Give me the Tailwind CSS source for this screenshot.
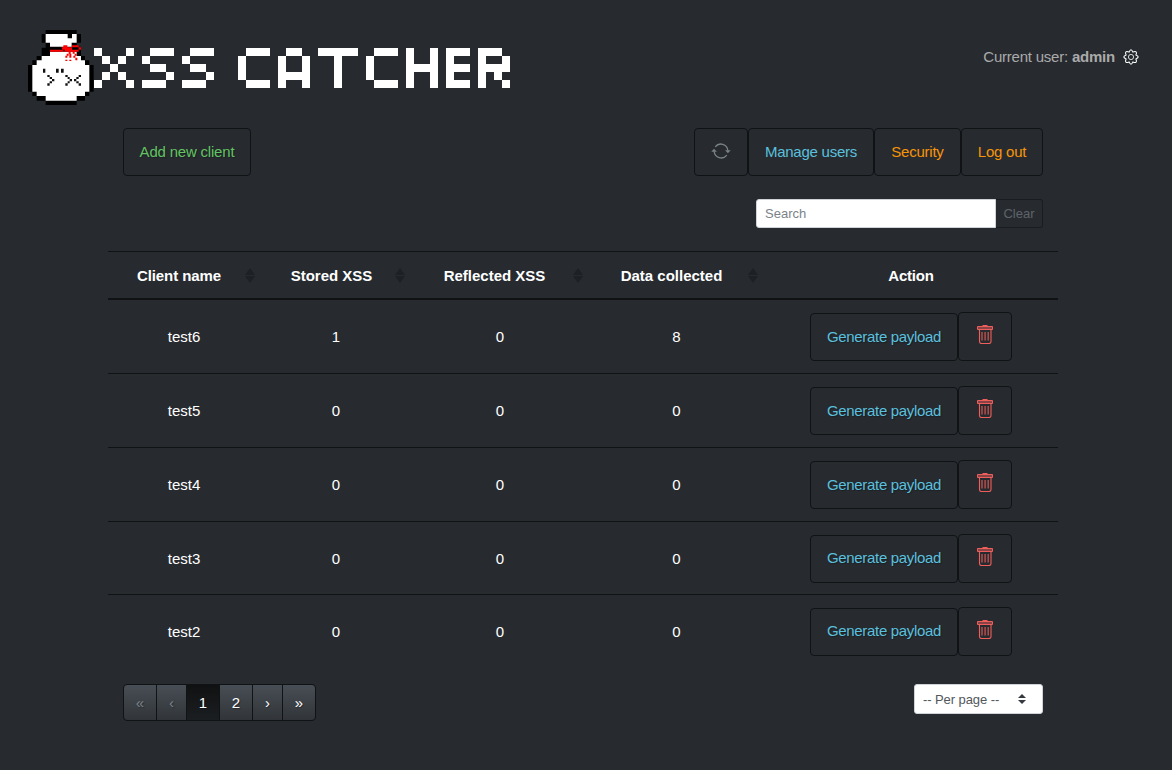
<!DOCTYPE html>
<html lang="en">
<head>
<meta charset="utf-8">
<title>XSS Catcher</title>
<script src="https://cdn.jsdelivr.net/npm/@tailwindcss/browser@4"></script>
</head>
<body class="h-[770px] overflow-hidden bg-[#272b30] font-['Liberation_Sans',Arial,sans-serif] text-[15px] leading-[22.5px] text-[#aaa]">
<svg class="hidden">
  <symbol id="trash" viewBox="0 0 16 20"><g fill="none" stroke="#ee5f5b"><path fill="#8a4244" d="M.5 2.500h15v3H.5z"/><path stroke-width="1.1" d="M2.500 5.500v12q0 2 2 2h7.500q2 0 2-2v-12"/><path stroke-width="1.3" stroke="#c9534f" d="M5 8v8.500M8.100 8v8.500M11.200 8v8.500"/><path stroke-width="1.2" d="M5.500 1.600h5"/></g></symbol>
  <symbol id="sort" viewBox="0 0 10 15"><path fill="#1d2024" d="M5 0l5 7H0zM5 15l5-7H0z"/></symbol>
</svg>
<header class="flex h-[128px] items-start justify-between pr-[33px] pl-5">
  <svg class="mt-5 h-[95px] w-[500px]" viewBox="0 0 500 95">
    <g transform="scale(.33333)">
      <path fill="#000" d="M77 30h93v12h13v26h-13v12h13v28h12v13h13v14h13v80h-13v13h-13v14h-25v13H77v-13H50v-14H37v-13H24v-80h13v-14h13v-13h15V83h12V68H65V42h12z"/>
      <path fill="#fff" d="M77 42h66v13h13V42h14v26h-15v12H90V68H77z"/>
      <path fill="#fff" d="M90 95h80v13h13v13h12v14h13v80h-13v13h-25v14H77v-14H50v-13H37v-80h13v-14h15v-13h25z"/>
      <path fill="#272b30" d="M183 80h15v28h-15z"/>
      <path fill="#f00" d="M90 89h40v6H90zM124 82h6v-6h12v6h14v-6h6v6h-6v7h20v-7h7v7h-7v6h-12v6h6v6h-6v-6h-6v-6h-6v6h-6v6h-6v-6h6v-6h-12v-6h-6zM162 76h14v6h-14zM136 107h6v6h-6zM148 101h6v12h-6zM160 107h6v6h-6zM136 119h6v4h-6zM148 119h6v4h-6zM166 113h6v8h-6z"/>
      <path fill="#111" d="M69 146h7v12h-7zM108 146h8v12h-8zM123 146h8v12h-8zM82 165h7v6h-7zM89 171h7v6h-7zM96 177h7v7h-7zM89 184h7v6h-7zM82 190h7v7h-7zM136 165h7v6h-7zM143 171h6v6h-6zM149 177h7v7h-7zM143 184h6v6h-6zM136 190h7v7h-7zM176 165h7v6h-7zM169 171h7v6h-7zM162 177h7v7h-7zM169 184h7v6h-7zM176 190h7v7h-7z"/>
    </g>
    <g fill="#fff" shape-rendering="crispEdges">
      <path d="M74 28h8v8h-8zM106 28h8v8h-8zM82 36h8v8h-8zM98 36h8v8h-8zM90 44h8v8h-8zM82 52h8v8h-8zM98 52h8v8h-8zM74 60h8v8h-8zM106 60h8v8h-8z"/>
      <path d="M130 28h24v8h-24zM122 36h8v8h-8zM130 44h16v8h-16zM146 52h8v8h-8zM122 60h24v8h-24z"/>
      <path d="M170 28h24v8h-24zM162 36h8v8h-8zM170 44h16v8h-16zM186 52h8v8h-8zM162 60h24v8h-24z"/>
      <path d="M226 28h24v8h-24zM218 36h8v24h-8zM226 60h24v8h-24z"/>
      <path d="M266 28h16v8h-16zM258 36h8v32h-8zM282 36h8v32h-8zM266 52h16v8h-16zM258 36h8v8h-8z"/>
      <path d="M298 28h40v8h-16v32h-8V36h-16z"/>
      <path d="M354 28h24v8h-24zM346 36h8v24h-8zM354 60h24v8h-24z"/>
      <path d="M386 28h8v16h16V28h8v40h-8V52h-16v16h-8z"/>
      <path d="M426 28h24v8h-16v8h16v8h-16v8h16v8h-24z"/>
      <path d="M458 28h24v8h-16v8h16v-8h8v16h-8v8h-8v-8h-8v16h-8zM482 60h8v8h-8z"/>
    </g>
  </svg>
  <div class="mt-[46px] flex items-center">
    <span class="tracking-[-0.22px]">Current user: <b>admin</b></span>
    <svg class="ml-2 size-4" viewBox="0 0 16 16" fill="none" stroke="#fff"><circle cx="8" cy="8" r="2.6" opacity=".8"/><path stroke-width="1.1" stroke-linejoin="round" d="M8 .8Q8.900 .8 9.900 3.100Q12.300 2 13.100 2.900Q14 3.700 12.900 6.100Q15.200 7.100 15.200 8Q15.200 8.900 12.900 9.900Q14 12.300 13.100 13.100Q12.300 14 9.900 12.900Q8.900 15.200 8 15.200Q7.100 15.200 6.100 12.900Q3.700 14 2.900 13.100Q2 12.300 3.100 9.900Q.8 8.900 .8 8Q.8 7.100 3.100 6.100Q2 3.700 2.900 2.900Q3.700 2 6.100 3.100Q7.100 .8 8 .8Z"/></svg>
  </div>
</header>
<main class="mx-auto w-[950px] -translate-x-[3px]">
  <div class="flex h-12 justify-between px-[15px] [&>*]:[text-shadow:1px_1px_1px_rgba(0,0,0,.3)]">
    <button class="h-12 w-32 rounded border border-[#101214] tracking-[-0.2px] text-[#62c462]">Add new client</button>
    <div class="flex tracking-[-0.24px]">
      <button class="flex h-12 w-[54px] items-center justify-center rounded border border-[#101214]"><svg class="-mt-0.5 h-5 w-5" viewBox="0 0 20 20" fill="none" stroke="#7a8288" stroke-width="1.3"><path d="M3.200 10.500a7 7 0 0 0 12.600 3.600M16.800 9.500A7 7 0 0 0 4.200 5.900"/><path fill="#7a8288" stroke="none" d="M.3 10.700 3 7.800l2.900 2.900zM14.100 9.300h5.600L16.900 12.200z"/></svg></button>
      <button class="h-12 w-[126px] rounded border border-[#101214] text-[#5bc0de]">Manage users</button>
      <button class="h-12 w-[87px] rounded border border-[#101214] text-[#f89406]">Security</button>
      <button class="h-12 w-[82px] rounded border border-[#101214] text-[#f89406]">Log out</button>
    </div>
  </div>
  <div class="mt-[23px] flex h-[29px] justify-end px-[15px] text-[13px]">
    <input class="h-[29px] w-60 rounded-l-[3px] border border-[#ced4da] bg-white px-2 placeholder:text-[#7a8288]" placeholder="Search">
    <button class="w-[47px] rounded-r-[3px] border border-l-0 border-[#1a1d20] pt-px text-[#5e646a]">Clear</button>
  </div>
  <table class="mt-[23px] w-[950px] table-fixed border-separate border-spacing-0 text-center text-white">
    <colgroup><col class="w-[152px]"><col class="w-[151px]"><col class="w-[178px]"><col class="w-[175px]"><col class="w-[294px]"></colgroup>
    <thead>
      <tr class="h-[49px] [&>th]:border-t [&>th]:border-b-2 [&>th]:border-[#101214]">
        <th><div class="flex items-center pr-[5px]"><span class="flex-1 pt-0.5 pl-[5px] tracking-[-0.08px]">Client name</span><svg class="h-[15px] w-2.5"><use href="#sort"/></svg></div></th>
        <th><div class="flex items-center pr-[6px]"><span class="flex-1 pt-0.5 pl-2">Stored XSS</span><svg class="h-[15px] w-2.5"><use href="#sort"/></svg></div></th>
        <th><div class="flex items-center pr-[6px]"><span class="flex-1 pt-0.5 pl-[5px]">Reflected XSS</span><svg class="h-[15px] w-2.5"><use href="#sort"/></svg></div></th>
        <th><div class="flex items-center pr-[6px]"><span class="flex-1 pt-0.5 pl-1.5">Data collected</span><svg class="h-[15px] w-2.5"><use href="#sort"/></svg></div></th>
        <th class="pt-0.5 tracking-[-0.2px]">Action</th>
      </tr>
    </thead>
    <tbody id="rows"></tbody>
  </table>
  <div class="mt-[17px] flex items-start justify-between px-[15px]">
    <div class="flex h-[37px] overflow-hidden rounded border border-[#101214] bg-linear-to-b from-[#484e55] to-[#313539] text-white [text-shadow:1px_1px_1px_rgba(0,0,0,.3)] [&>span]:flex [&>span]:items-center [&>span]:justify-center [&>span]:border-[#101214] [&>span]:pt-0.5">
      <span class="w-[33px] border-r text-[#7a8288]">«</span><span class="w-[30px] border-r text-[#7a8288]">‹</span><span class="w-[33px] border-r bg-linear-to-b from-[#101112] to-[#1b1e21]">1</span><span class="w-[33px] border-r">2</span><span class="w-[30px] border-r">›</span><span class="w-8">»</span>
    </div>
    <div class="flex h-[30px] w-[129px] items-center rounded-[3px] border border-[#ced4da] bg-white pr-4 pl-2 text-[13px] text-[#52575c]"><span class="flex-1 pt-0.5 tracking-[-0.08px]">-- Per page --</span><svg class="h-2.5 w-2" viewBox="0 0 8 10"><path fill="#343a40" d="M4 0l4 4H0zM4 10l4-4H0z"/></svg></div>
  </div>
</main>
<template id="row"><tr>
  <td class="pt-0.5"></td><td class="pt-0.5 pl-px"></td><td class="pt-0.5"></td><td class="pt-0.5"></td>
  <td><div class="flex items-end justify-center"><button class="h-12 w-[148px] rounded border border-[#101214] tracking-[-0.33px] text-[#5bc0de] [text-shadow:1px_1px_1px_rgba(0,0,0,.3)]">Generate payload</button><button class="flex h-[49px] w-[54px] justify-center rounded border border-[#101214] pt-[11px]"><svg class="h-5 w-4"><use href="#trash"/></svg></button></div></td>
</tr></template>
<script>
const heights = ['h-[73px]', 'h-[74px]', 'h-[74px]', 'h-[73px]', 'h-[73px]'];
[['test6', 1, 0, 8], ['test5', 0, 0, 0], ['test4', 0, 0, 0], ['test3', 0, 0, 0], ['test2', 0, 0, 0]].forEach((data, i) => {
  const tr = document.getElementById('row').content.firstElementChild.cloneNode(true);
  tr.classList.add(heights[i]);
  data.forEach((v, j) => tr.children[j].textContent = v);
  if (i) [...tr.children].forEach(td => td.classList.add('border-t', 'border-[#101214]'));
  document.getElementById('rows').append(tr);
});
</script>
</body>
</html>
